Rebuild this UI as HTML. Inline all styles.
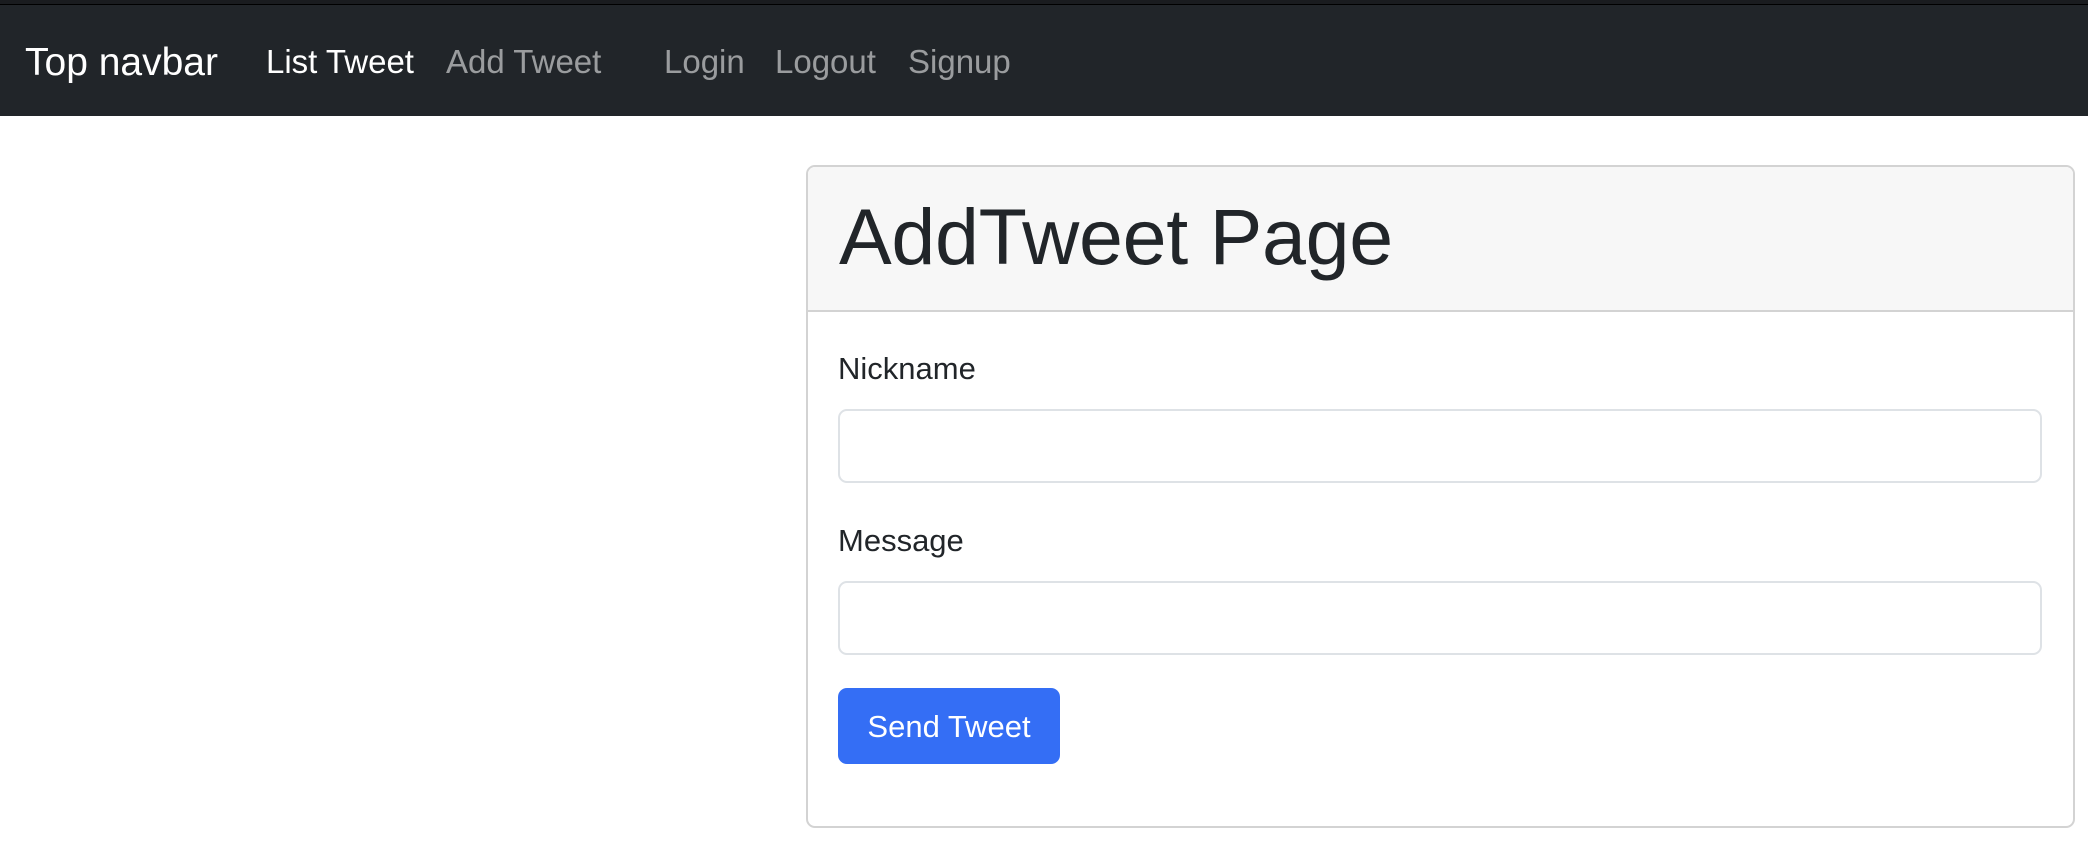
<!DOCTYPE html>
<html><head><meta charset="utf-8"><style>
*{box-sizing:border-box;margin:0;padding:0}
body{width:2088px;height:854px;background:#fff;font-family:"Liberation Sans",Arial,sans-serif;position:relative;overflow:hidden;color:#212529}
.strip{position:absolute;left:0;top:0;width:2088px;height:5px;background:#1a1c1f;border-bottom:1px solid #000}
.nav{position:absolute;left:0;top:5px;width:2088px;height:111px;background:#212529}
.nav span{position:absolute;top:37px;font-size:33px;line-height:40px;color:rgba(255,255,255,.55);white-space:nowrap}
.nav .brand{font-size:39px;color:#fff;top:35px;line-height:46px}
.nav .act{color:#fff}
.card{position:absolute;left:806px;top:165px;width:1269px;height:663px;border:2px solid #d3d3d3;border-radius:9px;overflow:hidden}
.hdr{height:145px;background:#f7f7f7;border-bottom:2px solid #d3d3d3;position:relative}
.hdr h1{position:absolute;left:31px;top:20px;font-size:79px;font-weight:normal;line-height:100px;letter-spacing:-0.3px}
.lbl{position:absolute;left:838px;font-size:31px;line-height:36px}
.inp{position:absolute;left:838px;width:1204px;height:74px;border:2px solid #dee2e6;border-radius:9px;background:#fff}
.btn{position:absolute;left:838px;top:688px;width:222px;height:76px;background:#346ef5;border-radius:9px;color:#fff;font-size:31px;line-height:78px;text-align:center}
</style></head><body>
<div class="strip"></div>
<div class="nav">
<span class="brand" style="left:25px">Top navbar</span>
<span class="act" style="left:266px">List Tweet</span>
<span style="left:446px">Add Tweet</span>
<span style="left:664px">Login</span>
<span style="left:775px">Logout</span>
<span style="left:908px">Signup</span>
</div>
<div class="card"><div class="hdr"><h1>AddTweet Page</h1></div></div>
<div class="lbl" style="top:351px">Nickname</div>
<div class="inp" style="top:409px"></div>
<div class="lbl" style="top:523px">Message</div>
<div class="inp" style="top:581px"></div>
<div class="btn">Send Tweet</div>
</body></html>
